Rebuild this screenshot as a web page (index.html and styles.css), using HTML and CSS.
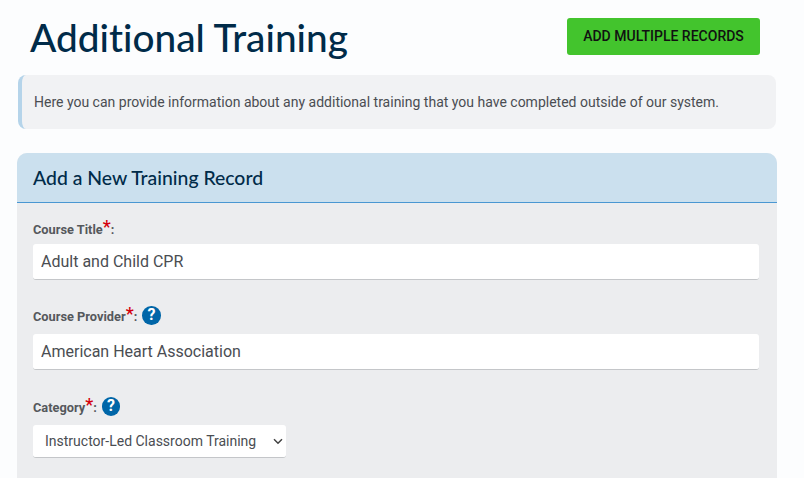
FILE: index.html
```html
<!DOCTYPE html>
<html lang="en">
<head>
    <meta charset="UTF-8">
    <meta name="viewport" content="width=device-width, initial-scale=1.0">
    <title>Additional Training</title>
    <link rel="stylesheet" href="styles.css">
</head>
<body>

    <header class="page-head">
        <h1>Additional Training</h1>
        <a class="btn-add" href="#">ADD MULTIPLE RECORDS</a>
    </header>

    <p class="info">Here you can provide information about any additional training that you have completed outside of our system.</p>

    <section class="panel">
        <h2 class="panel-title">Add a New Training Record</h2>
        <form class="panel-body">
            <div class="field">
                <label class="field-label"><span>Course Title</span><span class="req">*</span><span>:</span></label>
                <input class="text-input" type="text" value="Adult and Child CPR">
            </div>
            <div class="field">
                <label class="field-label has-help"><span>Course Provider</span><span class="req">*</span><span>:</span><span class="help">?</span></label>
                <input class="text-input" type="text" value="American Heart Association">
            </div>
            <div class="field field-select">
                <label class="field-label has-help"><span>Category</span><span class="req">*</span><span>:</span><span class="help">?</span></label>
                <select class="select-input">
                    <option>Instructor-Led Classroom Training</option>
                </select>
            </div>
        </form>
    </section>

</body>
</html>
```

FILE: styles.css
```css
html, body {
    height: 100%;
    overflow: hidden;
}
body {
    margin: 0;
    padding: 0 27px 0 17px;
    background: #fcfdfe;
    font-family: 'Roboto', sans-serif;
    color: #4a4d52;
}
.page-head {
    display: flex;
    justify-content: space-between;
    align-items: flex-start;
    height: 75px;
    padding: 0 17px 0 13px;
}
h1 {
    margin: 14px 0 0;
    font-family: 'Lato', sans-serif;
    font-variant-ligatures: none;
    font-size: 38.75px;
    line-height: 47px;
    font-weight: 500;
    color: #002b49;
}
.btn-add {
    margin-top: 18px;
    width: 193px;
    height: 37px;
    line-height: 37px;
    text-align: center;
    background: #43c42d;
    border-radius: 3px;
    color: #111;
    font-size: 14px;
    font-weight: 500;
    text-decoration: none;
}
.info {
    margin: 0 1px 24px;
    height: 54px;
    line-height: 54px;
    padding-left: 12px;
    background: #f1f2f4;
    border-left: 4px solid #b5d4ea;
    border-radius: 8px;
    font-size: 14px;
}
.panel {
    background: #ecedef;
    border-radius: 10px 10px 0 0;
}
.panel-title {
    margin: 0;
    height: 49px;
    line-height: 49px;
    padding-left: 16px;
    background: #cbe0ee;
    border-bottom: 1px solid #4a97d2;
    border-radius: 10px 10px 0 0;
    font-family: 'Lato', sans-serif;
    font-variant-ligatures: none;
    font-size: 19.4px;
    font-weight: 500;
    color: #002b49;
}
.panel-body {
    padding: 14px 18px 0 16px;
    height: 261px;
}
.field {
    margin-bottom: 22px;
}
.field-select {
    margin-top: 23px;
    margin-bottom: 0;
}
.field-label {
    display: flex;
    align-items: center;
    height: 24px;
    margin-bottom: 3px;
    font-size: 12.8px;
    font-weight: 700;
    color: #55585c;
}
.has-help {
    height: 29px;
}
.req {
    margin-bottom: 5px;
    color: #d4000c;
    font-size: 18px;
    line-height: 18px;
    font-weight: 500;
}
.help {
    width: 18.5px;
    height: 18.5px;
    line-height: 18.5px;
    margin: 0 0 2px 5px;
    border-radius: 50%;
    background: #0066a8;
    color: #fff;
    font-size: 16px;
    font-weight: 700;
    text-align: center;
}
.text-input {
    display: block;
    box-sizing: border-box;
    width: 100%;
    height: 36px;
    padding: 0 8px;
    background: #fff;
    border: none;
    border-bottom: 1px solid #c4c6c9;
    border-radius: 3px;
    font-family: 'Roboto', sans-serif;
    font-size: 16px;
    color: #4a4d52;
}
.select-input {
    display: block;
    box-sizing: border-box;
    appearance: none;
    width: 253px;
    height: 33px;
    padding: 0 12px;
    background: #fff url("data:image/svg+xml,%3Csvg xmlns='http://www.w3.org/2000/svg' width='10' height='7' viewBox='0 0 10 7'%3E%3Cpath d='M1 1.2l4 4 4-4' fill='none' stroke='%23444' stroke-width='1.5'/%3E%3C/svg%3E") no-repeat right 3px center;
    border: none;
    border-bottom: 1px solid #c4c6c9;
    border-radius: 3px;
    font-family: 'Roboto', sans-serif;
    font-size: 14px;
    color: #4a4d52;
}
```
